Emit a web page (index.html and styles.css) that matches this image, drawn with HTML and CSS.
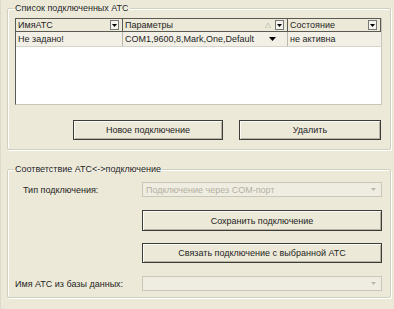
FILE: index.html
```html
<!DOCTYPE html>
<html lang="ru">
<head>
  <meta charset="UTF-8">
  <title>Подключения АТС</title>
  <link rel="stylesheet" href="styles.css">
</head>
<body>
  <div class="window">
    <!-- Список подключений -->
    <fieldset class="group group-list">
      <legend>Список подключенных АТС</legend>

      <div class="grid">
        <div class="grid-row grid-head">
          <div class="cell col-name">
            <span>ИмяАТС</span>
            <span class="drop-btn"><svg width="5" height="3" viewBox="0 0 5 3"><polygon points="0,0 5,0 2.5,3" fill="#000"/></svg></span>
          </div>
          <div class="cell col-params">
            <span>Параметры</span>
            <span class="sort-mark"><svg width="6" height="5" viewBox="0 0 6 5"><polygon points="3,0 6,5 0,5" fill="none" stroke="#c8c6b8"/></svg></span>
            <span class="drop-btn"><svg width="5" height="3" viewBox="0 0 5 3"><polygon points="0,0 5,0 2.5,3" fill="#000"/></svg></span>
          </div>
          <div class="cell col-state">
            <span>Состояние</span>
            <span class="drop-btn"><svg width="5" height="3" viewBox="0 0 5 3"><polygon points="0,0 5,0 2.5,3" fill="#000"/></svg></span>
          </div>
        </div>
        <div class="grid-row grid-data">
          <div class="cell col-name">Не задано!</div>
          <div class="cell col-params">
            <span>COM1,9600,8,Mark,One,Default</span>
            <span class="cell-arrow"><svg width="7" height="4" viewBox="0 0 7 4"><polygon points="0,0 7,0 3.5,4" fill="#000"/></svg></span>
          </div>
          <div class="cell col-state">не активна</div>
        </div>
      </div>

      <div class="button-row">
        <button class="btn btn-new">Новое подключение</button>
        <button class="btn btn-delete">Удалить</button>
      </div>
    </fieldset>

    <!-- Соответствие -->
    <fieldset class="group group-link">
      <legend>Соответствие АТС&lt;-&gt;подключение</legend>

      <div class="form-row row-type">
        <label class="form-label">Тип подключения:</label>
        <div class="combo">
          <span>Подключение через COM-порт</span>
          <svg width="5" height="3" viewBox="0 0 5 3"><polygon points="0,0 5,0 2.5,3" fill="#b8b6a8"/></svg>
        </div>
      </div>

      <button class="btn btn-wide btn-save">Сохранить подключение</button>
      <button class="btn btn-wide btn-bind">Связать подключение с выбранной АТС</button>

      <div class="form-row row-name">
        <label class="form-label">Имя АТС из базы данных:</label>
        <div class="combo">
          <span></span>
          <svg width="5" height="3" viewBox="0 0 5 3"><polygon points="0,0 5,0 2.5,3" fill="#b8b6a8"/></svg>
        </div>
      </div>
    </fieldset>
  </div>
</body>
</html>
```

FILE: styles.css
```css
:root {
  --face: #ece9d8;
  --etch-dark: #d0d0bf;
  --text: #1e1e1e;
  --disabled: #b3b09f;
  --grid-line: #5a5a55;
}

body {
  margin: 0;
  padding: 0;
  background: var(--face);
  font-family: "Liberation Sans", Arial, sans-serif;
  font-size: 9px;
  color: var(--text);
}

.window {
  width: 394px;
  height: 309px;
  overflow: hidden;
  border-left: 1px solid #dcdacb;
  box-sizing: border-box;
}

/* Group boxes */
.group {
  border: 1px solid var(--etch-dark);
  box-shadow: inset 1px 1px #fff, 1px 1px #fff;
  border-radius: 2px;
  display: flex;
  flex-direction: column;
}

.group legend {
  padding: 0 1px;
  margin-left: -1px;
  line-height: 13px;
  color: var(--text);
}

.group-list {
  margin: 2px 3px 0 6px;
  padding: 3px 8px 9px 7px;
}

.group-link {
  margin: 13px 3px 0 6px;
  padding: 0 8px 6px 7px;
}

/* Grid */
.grid {
  width: 367px;
  height: 87px;
  background: #fff;
  border-left: 1px solid var(--grid-line);
  border-right: 1px solid #c8c6b8;
  border-bottom: 1px solid #c8c6b8;
  box-sizing: border-box;
}

.grid-row {
  display: flex;
}

.grid-head {
  height: 14px;
  background: var(--face);
  border-top: 1px solid var(--grid-line);
  border-bottom: 1px solid var(--grid-line);
  border-right: 1px solid var(--grid-line);
  box-sizing: border-box;
}

.grid-data {
  height: 15px;
  background: #f2f0e6;
  border-bottom: 1px solid #d6d4c6;
  box-sizing: border-box;
}

.cell {
  display: flex;
  align-items: center;
  padding-left: 2px;
  white-space: nowrap;
  box-sizing: border-box;
  border-right: 1px solid var(--grid-line);
}

.grid-data .cell {
  border-right-color: #b9b7aa;
}

.col-name { width: 107px; }
.col-params { width: 165px; }
.col-state { flex: 1; border-right: none; }

.drop-btn {
  margin-left: auto;
  margin-right: 3px;
  width: 7px;
  height: 8px;
  border: 1px solid #777;
  background: #f4f3ec;
  display: flex;
  align-items: center;
  justify-content: center;
}

.sort-mark {
  margin-left: auto;
  margin-right: 4px;
  display: flex;
}

.sort-mark + .drop-btn {
  margin-left: 0;
}

.cell-arrow {
  margin-left: auto;
  margin-right: 11px;
  display: flex;
}

/* Buttons */
.button-row {
  display: flex;
  justify-content: flex-end;
  gap: 16px;
  margin-top: 15px;
  padding-right: 1px;
}

.btn {
  height: 20px;
  padding: 0;
  font-family: inherit;
  font-size: 9px;
  color: var(--text);
  background: var(--face);
  border: 1px solid #3c3c38;
  box-shadow: inset 1px 1px #fbfaf5, inset -1px -1px #b5b3a4;
  box-sizing: border-box;
}

.btn-new { width: 150px; }
.btn-delete { width: 142px; }

.btn-wide {
  width: 240px;
  align-self: flex-end;
}

.btn-save {
  height: 21px;
  margin-top: 13px;
}

.btn-bind {
  margin-top: 12px;
}

/* Form rows */
.form-row {
  display: flex;
  align-items: center;
}

.row-type {
  margin-top: 6px;
  padding-left: 8px;
}

.row-name {
  margin-top: 13px;
}

.form-label {
  flex: 1;
}

.combo {
  width: 240px;
  height: 15px;
  border: 1px solid #c9c7b8;
  background: #efede2;
  color: var(--disabled);
  display: flex;
  align-items: center;
  justify-content: space-between;
  padding: 0 5px 0 3px;
  box-sizing: border-box;
}
```
